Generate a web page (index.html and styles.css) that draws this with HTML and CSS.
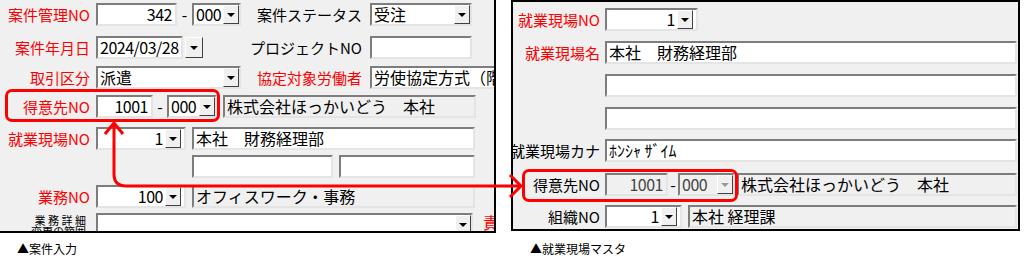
FILE: index.html
```html
<!DOCTYPE html>
<html lang="ja">
<head>
    <meta charset="utf-8">
    <title>得意先NO 連携</title>
    <link rel="stylesheet" href="styles.css">
</head>
<body>
    <div class="sheet">
        <div class="shots">
            <!-- 案件入力 -->
            <section class="panel panel-left">
                <div class="row">
                    <span class="lbl red">案件管理NO</span>
                    <div class="grp">
                        <span class="box num dg w81">342</span>
                        <span class="dash w15">-</span>
                        <span class="box combo dg w49"><span class="val">000</span><span class="btn"></span></span>
                    </div>
                    <span class="lbl mid">案件ステータス</span>
                    <span class="box combo w102"><span class="val">受注</span><span class="btn"></span></span>
                </div>
                <div class="row">
                    <span class="lbl red">案件年月日</span>
                    <div class="grp">
                        <span class="box dg w87">2024/03/28</span>
                        <span class="sbtn"></span>
                    </div>
                    <span class="lbl mid">プロジェクトNO</span>
                    <span class="box w102"></span>
                </div>
                <div class="row">
                    <span class="lbl red">取引区分</span>
                    <div class="grp">
                        <span class="box combo w145"><span class="val">派遣</span><span class="btn"></span></span>
                    </div>
                    <span class="lbl mid red">協定対象労働者</span>
                    <span class="box w140">労使協定方式（階</span>
                </div>
                <div class="row">
                    <span class="lbl red">得意先NO</span>
                    <span class="box num dg w57">1001</span>
                    <span class="dash w14">-</span>
                    <span class="box combo dg w50"><span class="val">000</span><span class="btn"></span></span>
                    <span class="box ro w253 ml6">株式会社ほっかいどう　本社</span>
                </div>
                <div class="row">
                    <span class="lbl red">就業現場NO</span>
                    <span class="box combo num dg w90"><span class="val">1</span><span class="btn"></span></span>
                    <span class="box w283 ml6">本社　財務経理部</span>
                </div>
                <div class="row">
                    <span class="box w141 ml192"></span>
                    <span class="box w136 ml6"></span>
                </div>
                <div class="row">
                    <span class="lbl red">業務NO</span>
                    <span class="box combo num dg w90"><span class="val">100</span><span class="btn"></span></span>
                    <span class="box ro w283 ml6">オフィスワーク・事務</span>
                </div>
                <div class="row row-top">
                    <span class="lbl small">業 務 詳 細<br>変更の範囲</span>
                    <span class="box combo w377"><span class="val"></span><span class="btn"></span></span>
                    <span class="cut red">責</span>
                </div>
            </section>

            <!-- 就業現場マスタ -->
            <section class="panel panel-right">
                <div class="row">
                    <span class="lbl red">就業現場NO</span>
                    <span class="box combo num dg w93"><span class="val">1</span><span class="btn"></span></span>
                </div>
                <div class="row">
                    <span class="lbl red">就業現場名</span>
                    <span class="box w412">本社　財務経理部</span>
                </div>
                <div class="row">
                    <span class="lbl"></span>
                    <span class="box w412"></span>
                </div>
                <div class="row">
                    <span class="lbl"></span>
                    <span class="box w412"></span>
                </div>
                <div class="row">
                    <span class="lbl">就業現場カナ</span>
                    <span class="box w412">ﾎﾝｼｬ ｻﾞｲﾑ</span>
                </div>
                <div class="row">
                    <span class="lbl">得意先NO</span>
                    <span class="box ro num dg off w63">1001</span>
                    <span class="dash w10">-</span>
                    <span class="box combo ro dg off w57"><span class="val">000</span><span class="btn"></span></span>
                    <span class="box ro w280 ml2">株式会社ほっかいどう　本社</span>
                </div>
                <div class="row">
                    <span class="lbl">組織NO</span>
                    <span class="box combo num dg w77"><span class="val">1</span><span class="btn"></span></span>
                    <span class="box ro w329 ml6">本社 経理課</span>
                </div>
            </section>
        </div>

        <div class="captions">
            <span class="cap cap-left">▲案件入力</span>
            <span class="cap cap-right">▲就業現場マスタ</span>
        </div>

        <!-- 注釈 -->
        <div class="hl hl-left"></div>
        <div class="hl hl-right"></div>
        <svg class="arrow" width="1024" height="261" viewBox="0 0 1024 261">
            <path d="M114 125 V174 Q114 186 126 186 H519" />
            <path d="M105 134 L114 123 L123 134" />
            <path d="M510 175 L521 186 L510 197" />
        </svg>
    </div>
</body>
</html>
```

FILE: styles.css
```css
*{
    box-sizing: border-box;
}
body{
    margin: 0;
    background-color: #fff;
    font-family: "Noto Sans CJK JP", sans-serif;
    color: #000;
}

.sheet{
    position: relative;
    width: 1024px;
    height: 261px;
    overflow: hidden;
}
.shots{
    display: flex;
    align-items: flex-start;
}

.panel{
    background-color: #f0f0f0;
    overflow: hidden;
    display: grid;
    align-content: start;
}
.panel-left{
    width: 496px;
    height: 233px;
    border-right: 2px solid #000;
    border-bottom: 2px solid #000;
    padding-top: 3px;
    grid-template-rows: 33px 30px 29px 32px 28px 30px 28px 24px;
}
.panel-right{
    width: 509px;
    height: 231px;
    margin-left: 15px;
    border: 2px solid #000;
    padding-top: 6px;
    grid-template-rows: 33px 33px 33px 32px 34px 32px 24px;
}

.row{
    display: flex;
    align-items: center;
    height: 23px;
    white-space: nowrap;
}
.row-top{
    align-items: flex-start;
}

.lbl{
    flex: none;
    display: flex;
    justify-content: flex-end;
    font-size: 15px;
    line-height: 19px;
}
.panel-left .lbl{
    width: 90px;
    margin-right: 6px;
}
.panel-right .lbl{
    width: 87px;
    margin-right: 5px;
}
.lbl.mid{
    width: 106px;
    margin-right: 8px;
}
.panel-left .lbl.small{
    display: block;
    text-align: right;
    font-size: 11px;
    line-height: 11px;
    padding-top: 2px;
    margin-right: 10px;
    width: 86px;
}
.red{
    color: #f00;
}

.grp{
    display: flex;
    align-items: center;
    width: 160px;
    flex: none;
}

/* sunken input boxes */
.box{
    flex: none;
    display: block;
    height: 23px;
    border: 2px solid;
    border-color: #7d7d7d #e4e4e4 #e4e4e4 #7d7d7d;
    background-color: #fff;
    font-size: 16px;
    line-height: 19px;
    padding: 0 2px;
}
.box.ro{
    background-color: #f0f0f0;
}
.box.num{
    text-align: right;
    padding-right: 3px;
}
.box.dg{
    letter-spacing: -0.5px;
}
.box.off{
    color: #444;
}

.combo{
    display: flex;
    padding-right: 0;
}
.combo .val{
    flex: 1;
}
.combo.num .val{
    padding-right: 2px;
}
.btn, .sbtn{
    flex: none;
    display: flex;
    justify-content: center;
    align-items: center;
    width: 16px;
    height: 19px;
    background-color: #f0f0f0;
    border: 1px solid;
    border-color: #fff #404040 #404040 #fff;
}
.btn::after, .sbtn::after{
    content: "";
    width: 0;
    height: 0;
    border-left: 4px solid transparent;
    border-right: 4px solid transparent;
    border-top: 4px solid #000;
}
.off .btn::after{
    border-top-color: #9a9a9a;
}
.sbtn{
    width: 18px;
    height: 21px;
    margin-left: 2px;
}

.dash{
    flex: none;
    text-align: center;
    font-size: 16px;
    line-height: 19px;
}
.cut{
    margin-left: 10px;
    font-size: 16px;
    line-height: 19px;
}

.w10{ width: 10px; }
.w14{ width: 14px; }
.w15{ width: 15px; }
.w49{ width: 49px; }
.w50{ width: 50px; }
.w57{ width: 57px; }
.w63{ width: 63px; }
.w77{ width: 77px; }
.w81{ width: 81px; }
.w87{ width: 87px; }
.w90{ width: 90px; }
.w93{ width: 93px; }
.w102{ width: 102px; }
.w136{ width: 136px; }
.w140{ width: 140px; }
.w141{ width: 141px; }
.w145{ width: 145px; }
.w253{ width: 253px; }
.w280{ width: 280px; }
.w283{ width: 283px; }
.w329{ width: 329px; }
.w377{ width: 377px; }
.w412{ width: 412px; }
.ml2{ margin-left: 2px; }
.ml6{ margin-left: 6px; }
.ml192{ margin-left: 192px; }

.captions{
    display: flex;
    margin-top: 8px;
    font-size: 12px;
    line-height: 16px;
}
.cap-left{
    margin-left: 17px;
    width: 513px;
}

/* red annotations over the screenshots */
.hl{
    position: absolute;
    border: 3px solid #f00;
    border-radius: 7px;
}
.hl-left{
    left: 5px;
    top: 89px;
    width: 215px;
    height: 33px;
}
.hl-right{
    left: 522px;
    top: 169px;
    width: 216px;
    height: 33px;
}
.arrow{
    position: absolute;
    left: 0;
    top: 0;
    pointer-events: none;
}
.arrow path{
    fill: none;
    stroke: #f00;
    stroke-width: 3;
    stroke-linejoin: round;
}
```
